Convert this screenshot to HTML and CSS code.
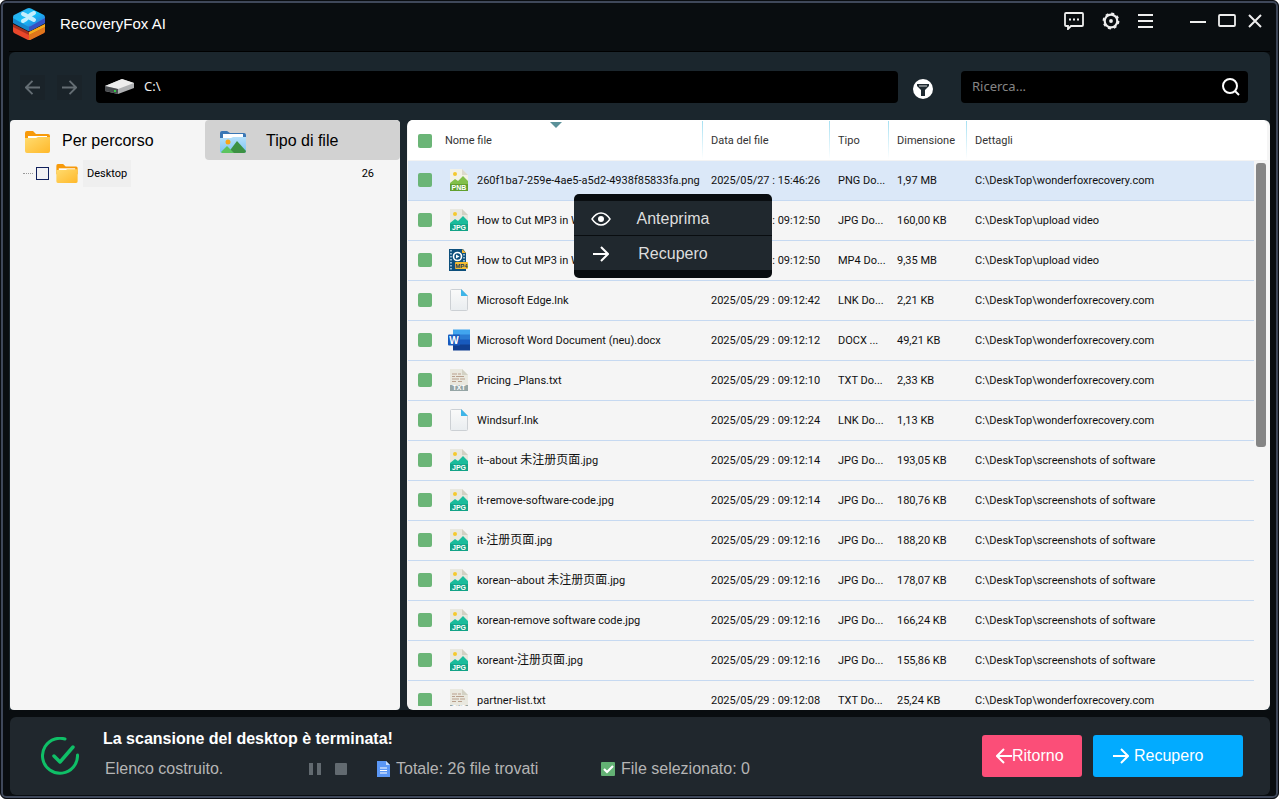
FILE: index.html
```html
<!DOCTYPE html>
<html lang="it">
  <head>
    <meta charset="utf-8">
    <title>RecoveryFox AI</title>
    <link rel="stylesheet" href="styles.css">
  </head>
  <body>
    <svg class="gradients" aria-hidden="true">
      <defs>
        <linearGradient id="gold" x1="0" y1="0" x2="1" y2="1">
          <stop offset="0" stop-color="#ffdc70"/>
          <stop offset="1" stop-color="#ffb82a"/>
        </linearGradient>
        <linearGradient id="sky" x1="0" y1="0" x2="0" y2="1">
          <stop offset="0" stop-color="#b5e0fb"/>
          <stop offset="1" stop-color="#7cc3f3"/>
        </linearGradient>
        <linearGradient id="page" x1="0" y1="0" x2="0" y2="1">
          <stop offset="0" stop-color="#fafafa"/>
          <stop offset="1" stop-color="#e9edf0"/>
        </linearGradient>
      </defs>
    </svg>
    <svg class="sprite" aria-hidden="true">
      <symbol id="folder" viewBox="0 0 25 22">
        <path d="M0 2Q0 0 2 0H8L11 3H23Q25 3 25 5V12H0Z" fill="#f79a0a"/>
        <rect x="3" y="5" width="19" height="5" fill="#fff"/>
        <path d="M0 7H11L13 6H25V20Q25 22 23 22H2Q0 22 0 20Z" fill="url(#gold)"/>
      </symbol>
      <symbol id="jpg" viewBox="0 0 18 22">
        <path d="M0 0H12L18 6V22H0Z" fill="#e9e8df"/>
        <path d="M12 0L18 6H12Z" fill="#d3d1c4"/>
        <circle cx="5" cy="5" r="2" fill="#f5c92f"/>
        <path d="M0 14L5 10L8 12L13 7L18 12V17H0Z" fill="#1abc9c"/>
        <rect y="15" width="18" height="7" fill="#12a387"/>
        <text x="9" y="21" class="tag">JPG</text>
      </symbol>
      <symbol id="png" viewBox="0 0 18 22">
        <path d="M0 0H12L18 6V22H0Z" fill="#f3f2e8"/>
        <path d="M12 0L18 6H12Z" fill="#dcdacd"/>
        <circle cx="5" cy="5" r="2" fill="#f5c92f"/>
        <path d="M0 14L5 10L8 12L13 7L18 12V17H0Z" fill="#82c04a"/>
        <rect y="15" width="18" height="7" fill="#61a02e"/>
        <text x="9" y="21" class="tag">PNB</text>
      </symbol>
      <symbol id="mp4" viewBox="0 0 20 22">
        <path d="M0 0H14L17 4V22H0Z" fill="#0d4f7c"/>
        <path d="M13 0L17 4H13Z" fill="#f2b632"/>
        <path d="M2 1V22M15 5V13" stroke="#cfe4f2" stroke-width="1.4" stroke-dasharray="1.5 1.5"/>
        <circle cx="8.500" cy="7.500" r="4" fill="none" stroke="#fff" stroke-width="1.6"/>
        <path d="M7 5.500V9.500L10.500 7.500Z" fill="#fff"/>
        <rect x="6" y="13" width="13" height="7" rx="1" fill="#f5bd2f"/>
        <text x="12.500" y="19" class="tag tag-dark">MP4</text>
      </symbol>
      <symbol id="txt" viewBox="0 0 18 22">
        <path d="M0 0H12L18 6V22H0Z" fill="#e9e8df"/>
        <path d="M12 0L18 6H12Z" fill="#d3d1c4"/>
        <path d="M2 5H7M8 5H11M2 7.500H5M6 7.500H14M2 10H9M10 10H15M2 12.500H6M8 12.500H12" stroke="#b9a08d"/>
        <rect y="16" width="18" height="6" fill="#95a5a5"/>
        <text x="9" y="21" class="tag">TXT</text>
      </symbol>
      <symbol id="blank" viewBox="0 0 18 22">
        <path d="M.5 1.500Q.5.500 1.500.500H11.500L17.500 7V20.500Q17.500 21.500 16.500 21.500H1.500Q.5 21.500.5 20.500Z" fill="url(#page)" stroke="#ccd0d4"/>
        <path d="M11 0L18 7H11Z" fill="#3fb5e8"/>
      </symbol>
      <symbol id="word" viewBox="0 0 22 21">
        <rect x="5" width="17" height="6" fill="#41a5ee"/>
        <rect x="5" y="5" width="17" height="6" fill="#2b7cd3"/>
        <rect x="5" y="10" width="17" height="6" fill="#185abd"/>
        <rect x="5" y="15" width="17" height="6" fill="#103f91"/>
        <rect y="5" width="12" height="11" rx="1" fill="#185abd"/>
        <text x="6" y="14" class="tag tag-word">W</text>
      </symbol>
      <symbol id="arrow-right" viewBox="0 0 16 16">
        <path d="M0 8H15M8 1L15 8L8 15" fill="none" stroke="currentColor" stroke-width="2"/>
      </symbol>
      <symbol id="arrow-left" viewBox="0 0 16 16">
        <path d="M16 8H1M8 1L1 8L8 15" fill="none" stroke="currentColor" stroke-width="2"/>
      </symbol>
    </svg>

    <div class="window">
      <header class="titlebar">
        <svg class="logo" viewBox="0 0 32 32" aria-hidden="true">
          <defs>
            <linearGradient id="top" x1="0" y1="0" x2="1" y2="1">
              <stop offset="0" stop-color="#3a9fe6"/>
              <stop offset=".5" stop-color="#12c4fa"/>
              <stop offset="1" stop-color="#3563d5"/>
            </linearGradient>
          </defs>
          <path d="M0 18L16 26L32 18V23Q32 24 31 25L17 32Q16 32 15 32L1 25Q0 24 0 23Z" fill="#e8472b"/>
          <path d="M16 26L32 18V23Q32 24 31 25L17 32H16Z" fill="#e0761c"/>
          <path d="M0 16L16 24L32 16V19L16 27L0 19Z" fill="#a8301f"/>
          <path d="M16 24L32 16V19L16 27Z" fill="#f6ac1d"/>
          <path d="M0 9L16 17L32 9V15L17 23H15L0 15Z" fill="#1687cc"/>
          <path d="M16 17L32 9V15L17 23H16Z" fill="#3551c4"/>
          <path d="M0 10Q0 7 1 7L14 .5Q16 -.5 18 .5L31 7Q32 8 32 10L18 18Q16 19 14 18Z" fill="url(#top)"/>
          <path d="M10 6Q13 7 15 9Q18 6 21 5M10 13Q13 12 15 9Q18 10 21 12" fill="none" stroke="#c4eefd" stroke-width="4" stroke-linecap="round"/>
        </svg>
        <h1 class="app-name">RecoveryFox AI</h1>
        <div class="window-tools">
          <button class="tool" aria-label="Feedback">
            <svg width="20" height="18" viewBox="0 0 20 18"><path d="M2 1H18Q19 1 19 2V13Q19 14 18 14H7L4 17V14H2Q1 14 1 13V2Q1 1 2 1Z" fill="none" stroke="currentColor" stroke-width="1.800"/><path d="M5 6.500H7V8.500H5ZM9 6.500H11V8.500H9ZM13 6.500H15V8.500H13Z" fill="currentColor"/></svg>
          </button>
          <button class="tool" aria-label="Impostazioni">
            <svg width="18" height="18" viewBox="0 0 18 18" fill="none" stroke="currentColor"><circle cx="9" cy="9" r="6.300" stroke-width="2.200"/><circle cx="9" cy="9" r="7.600" stroke-width="1.600" stroke-dasharray="3 2.969"/><circle cx="9" cy="9" r="1.900" fill="currentColor" stroke="none"/></svg>
          </button>
          <button class="tool" aria-label="Menu">
            <svg width="16" height="16" viewBox="0 0 16 16"><path d="M0 2H15M0 8H15M0 14H15" stroke="currentColor" stroke-width="2"/></svg>
          </button>
        </div>
        <div class="window-controls">
          <button class="tool" aria-label="Riduci a icona">
            <svg width="16" height="16" viewBox="0 0 16 16"><path d="M0 9H16" stroke="currentColor" stroke-width="2"/></svg>
          </button>
          <button class="tool" aria-label="Ingrandisci">
            <svg width="18" height="14" viewBox="0 0 18 14"><rect x="1" y="1" width="16" height="11" rx="1" fill="none" stroke="currentColor" stroke-width="1.800"/></svg>
          </button>
          <button class="tool" aria-label="Chiudi">
            <svg width="14" height="14" viewBox="0 0 14 14"><path d="M1 1L13 13M13 1L1 13" stroke="currentColor" stroke-width="2"/></svg>
          </button>
        </div>
      </header>

      <main class="workspace">
        <div class="toolbar">
          <div class="history">
            <button class="nav" aria-label="Indietro"><svg width="15" height="15"><use href="#arrow-left"/></svg></button>
            <button class="nav" aria-label="Avanti"><svg width="15" height="15"><use href="#arrow-right"/></svg></button>
          </div>
          <div class="field path">
            <svg width="30" height="16" viewBox="0 0 30 16" aria-hidden="true">
              <path d="M0 7L17 0L29 4V9L13 15L0 12Z" fill="#aeb0b2"/>
              <path d="M0 7L17 0L29 4L13 10Z" fill="#ededed"/>
              <path d="M0 7L13 10V15L0 12Z" fill="#4a4d50"/>
              <rect x="9" y="11" width="2" height="2" fill="#35c94a"/>
            </svg>
            <input type="text" value="C:\" aria-label="Percorso">
          </div>
          <button class="filter" aria-label="Filtro">
            <svg width="20" height="20" viewBox="0 0 20 20"><circle cx="10" cy="10" r="10" fill="#fff"/><path d="M4 5H16V7L12 11V17H8V11L4 7Z" fill="#1f2a31"/><path d="M6 7H14" stroke="#fff" stroke-width=".8"/></svg>
          </button>
          <div class="field search">
            <input type="search" placeholder="Ricerca..." aria-label="Ricerca">
            <button class="search-button" aria-label="Cerca">
              <svg width="18" height="18" viewBox="0 0 18 18"><circle cx="8" cy="8" r="7" fill="none" stroke="currentColor" stroke-width="2"/><path d="M13 13L17 17" stroke="currentColor" stroke-width="2"/></svg>
            </button>
          </div>
        </div>

        <div class="panels">
          <aside class="sidebar">
            <div class="tabs">
              <button class="tab">
                <svg width="25" height="22" aria-hidden="true"><use href="#folder"/></svg>
                <span>Per percorso</span>
              </button>
              <button class="tab tab-idle">
                <svg width="26" height="22" viewBox="0 0 26 22" aria-hidden="true">
                  <path d="M0 2Q0 0 2 0H7L10 2H24Q26 2 26 4V10H0Z" fill="#3a77b5"/>
                  <rect x="3" y="3" width="20" height="5" fill="#fff"/>
                  <path d="M0 7H11L13 6H26V20Q26 22 24 22H2Q0 22 0 20Z" fill="url(#sky)"/>
                  <circle cx="8" cy="11" r="2.500" fill="#f9a51a"/>
                  <path d="M8 22L17 10L26 20Q26 22 24 22Z" fill="#3c9143"/>
                  <path d="M1 21L7 15L14 22H2Z" fill="#5cc45f"/>
                </svg>
                <span>Tipo di file</span>
              </button>
            </div>
            <div class="tree-row">
              <span class="tree-line"></span>
              <input class="tree-check" type="checkbox" id="desktop">
              <svg width="22" height="19" viewBox="0 0 25 22" aria-hidden="true"><use href="#folder"/></svg>
              <label class="tree-name" for="desktop">Desktop</label>
              <span class="tree-count">26</span>
            </div>
          </aside>

          <section class="files">
            <div class="file-scroll">
              <table class="file-table">
                <colgroup>
                  <col class="col-check"><col class="col-name"><col class="col-date"><col class="col-type"><col class="col-size"><col><col class="col-bar">
                </colgroup>
                <thead>
                  <tr>
                    <th><input class="check" type="checkbox" aria-label="Seleziona tutto"></th>
                    <th class="sorted">Nome file</th>
                    <th>Data del file</th>
                    <th>Tipo</th>
                    <th>Dimensione</th>
                    <th>Dettagli</th>
                    <th></th>
                  </tr>
                </thead>
                <tbody>
                  <tr class="selected">
                    <td><input class="check" type="checkbox" aria-label="260f1ba7-259e-4ae5-a5d2-4938f85833fa.png"></td>
                    <td><div class="file"><svg><use href="#png"/></svg>260f1ba7-259e-4ae5-a5d2-4938f85833fa.png</div></td>
                    <td>2025/05/27 : 15:46:26</td><td>PNG Do...</td><td>1,97 MB</td><td>C:\DeskTop\wonderfoxrecovery.com</td><td></td>
                  </tr>
                  <tr>
                    <td><input class="check" type="checkbox" aria-label="How to Cut MP3, JPG"></td>
                    <td><div class="file"><svg><use href="#jpg"/></svg>How to Cut MP3 in W</div></td>
                    <td>2025/05/29 : 09:12:50</td><td>JPG Do...</td><td>160,00 KB</td><td>C:\DeskTop\upload video</td><td></td>
                  </tr>
                  <tr>
                    <td><input class="check" type="checkbox" aria-label="How to Cut MP3, MP4"></td>
                    <td><div class="file"><svg><use href="#mp4"/></svg>How to Cut MP3 in W</div></td>
                    <td>2025/05/29 : 09:12:50</td><td>MP4 Do...</td><td>9,35 MB</td><td>C:\DeskTop\upload video</td><td></td>
                  </tr>
                  <tr>
                    <td><input class="check" type="checkbox" aria-label="Microsoft Edge.lnk"></td>
                    <td><div class="file"><svg><use href="#blank"/></svg>Microsoft Edge.lnk</div></td>
                    <td>2025/05/29 : 09:12:42</td><td>LNK Do...</td><td>2,21 KB</td><td>C:\DeskTop\wonderfoxrecovery.com</td><td></td>
                  </tr>
                  <tr>
                    <td><input class="check" type="checkbox" aria-label="Microsoft Word Document (neu).docx"></td>
                    <td><div class="file"><svg><use href="#word"/></svg>Microsoft Word Document (neu).docx</div></td>
                    <td>2025/05/29 : 09:12:12</td><td>DOCX ...</td><td>49,21 KB</td><td>C:\DeskTop\wonderfoxrecovery.com</td><td></td>
                  </tr>
                  <tr>
                    <td><input class="check" type="checkbox" aria-label="Pricing _Plans.txt"></td>
                    <td><div class="file"><svg><use href="#txt"/></svg>Pricing _Plans.txt</div></td>
                    <td>2025/05/29 : 09:12:10</td><td>TXT Do...</td><td>2,33 KB</td><td>C:\DeskTop\wonderfoxrecovery.com</td><td></td>
                  </tr>
                  <tr>
                    <td><input class="check" type="checkbox" aria-label="Windsurf.lnk"></td>
                    <td><div class="file"><svg><use href="#blank"/></svg>Windsurf.lnk</div></td>
                    <td>2025/05/29 : 09:12:24</td><td>LNK Do...</td><td>1,13 KB</td><td>C:\DeskTop\wonderfoxrecovery.com</td><td></td>
                  </tr>
                  <tr>
                    <td><input class="check" type="checkbox" aria-label="it--about 未注册页面.jpg"></td>
                    <td><div class="file"><svg><use href="#jpg"/></svg><span>it--about <span class="cjk">未注册页面</span>.jpg</span></div></td>
                    <td>2025/05/29 : 09:12:14</td><td>JPG Do...</td><td>193,05 KB</td><td>C:\DeskTop\screenshots of software</td><td></td>
                  </tr>
                  <tr>
                    <td><input class="check" type="checkbox" aria-label="it-remove-software-code.jpg"></td>
                    <td><div class="file"><svg><use href="#jpg"/></svg>it-remove-software-code.jpg</div></td>
                    <td>2025/05/29 : 09:12:14</td><td>JPG Do...</td><td>180,76 KB</td><td>C:\DeskTop\screenshots of software</td><td></td>
                  </tr>
                  <tr>
                    <td><input class="check" type="checkbox" aria-label="it-注册页面.jpg"></td>
                    <td><div class="file"><svg><use href="#jpg"/></svg><span>it-<span class="cjk">注册页面</span>.jpg</span></div></td>
                    <td>2025/05/29 : 09:12:16</td><td>JPG Do...</td><td>188,20 KB</td><td>C:\DeskTop\screenshots of software</td><td></td>
                  </tr>
                  <tr>
                    <td><input class="check" type="checkbox" aria-label="korean--about 未注册页面.jpg"></td>
                    <td><div class="file"><svg><use href="#jpg"/></svg><span>korean--about <span class="cjk">未注册页面</span>.jpg</span></div></td>
                    <td>2025/05/29 : 09:12:16</td><td>JPG Do...</td><td>178,07 KB</td><td>C:\DeskTop\screenshots of software</td><td></td>
                  </tr>
                  <tr>
                    <td><input class="check" type="checkbox" aria-label="korean-remove software code.jpg"></td>
                    <td><div class="file"><svg><use href="#jpg"/></svg>korean-remove software code.jpg</div></td>
                    <td>2025/05/29 : 09:12:16</td><td>JPG Do...</td><td>166,24 KB</td><td>C:\DeskTop\screenshots of software</td><td></td>
                  </tr>
                  <tr>
                    <td><input class="check" type="checkbox" aria-label="koreant-注册页面.jpg"></td>
                    <td><div class="file"><svg><use href="#jpg"/></svg><span>koreant-<span class="cjk">注册页面</span>.jpg</span></div></td>
                    <td>2025/05/29 : 09:12:16</td><td>JPG Do...</td><td>155,86 KB</td><td>C:\DeskTop\screenshots of software</td><td></td>
                  </tr>
                  <tr>
                    <td><input class="check" type="checkbox" aria-label="partner-list.txt"></td>
                    <td><div class="file"><svg><use href="#txt"/></svg>partner-list.txt</div></td>
                    <td>2025/05/29 : 09:12:08</td><td>TXT Do...</td><td>25,24 KB</td><td>C:\DeskTop\wonderfoxrecovery.com</td><td></td>
                  </tr>
                </tbody>
              </table>
            </div>
            <div class="scroll-thumb"></div>
            <div class="context-menu">
              <button class="menu-item">
                <svg width="20" height="14" viewBox="0 0 20 14"><path d="M1 7Q5 1 10 1T19 7Q15 13 10 13T1 7Z" fill="none" stroke="currentColor" stroke-width="1.400"/><circle cx="10" cy="7" r="3" fill="currentColor"/></svg>
                <span>Anteprima</span>
              </button>
              <button class="menu-item">
                <svg width="16" height="16" viewBox="0 0 16 16"><use href="#arrow-right"/></svg>
                <span>Recupero</span>
              </button>
            </div>
          </section>
        </div>
      </main>

      <footer class="status">
        <svg width="38" height="38" viewBox="0 0 38 38" aria-hidden="true">
          <path d="M24 2Q19 .5 14 2A17.500 17.500 0 1 0 36.500 18" fill="none" stroke="#0fbf67" stroke-width="3" stroke-linecap="round"/>
          <path d="M13 19L19 25L32 10" fill="none" stroke="#0fbf67" stroke-width="3.500" stroke-linecap="round" stroke-linejoin="round"/>
        </svg>
        <div class="status-text">
          <h2 class="status-title">La scansione del desktop è terminata!</h2>
          <div class="status-line">
            <span>Elenco costruito.</span>
            <div class="scan-controls">
              <button class="scan" aria-label="Pausa"><svg width="12" height="12"><path d="M0 0H4V12H0ZM8 0H12V12H8Z" fill="currentColor"/></svg></button>
              <button class="scan" aria-label="Ferma"><svg width="12" height="12"><rect width="12" height="12" rx="1" fill="currentColor"/></svg></button>
            </div>
            <div class="stat">
              <svg width="13" height="16" viewBox="0 0 13 16" aria-hidden="true"><path d="M0 0H9L13 4V16H0Z" fill="#5b97f5"/><path d="M9 0L13 4H9Z" fill="#c9defc"/><path d="M3 7H10M3 9.500H10M3 12H10" stroke="#fff"/></svg>
              <span>Totale: 26 file trovati</span>
            </div>
            <div class="stat">
              <svg width="14" height="14" viewBox="0 0 14 14" aria-hidden="true"><rect width="14" height="14" rx="1" fill="#63b174"/><path d="M3 7L6 10L12 4" fill="none" stroke="#fff" stroke-width="2.200"/></svg>
              <span>File selezionato: 0</span>
            </div>
          </div>
        </div>
        <button class="action action-back"><svg width="16" height="16"><use href="#arrow-left"/></svg>Ritorno</button>
        <button class="action action-recover"><svg width="16" height="16"><use href="#arrow-right"/></svg>Recupero</button>
      </footer>
    </div>
  </body>
</html>
```

FILE: styles.css
```css
* {
  box-sizing: border-box;
}
body {
  margin: 0;
  background-color: white;
  font-family: 'Liberation Sans', Arial, sans-serif;
  font-size: 16px;
}
button {
  margin: 0;
  padding: 0;
  border: 0;
  background: none;
  color: inherit;
  font: inherit;
}
svg {
  display: block;
  flex: none;
}
.gradients {
  position: absolute;
  width: 0;
  height: 0;
}
.sprite {
  display: none;
}
.tag {
  fill: white;
  font-family: 'Liberation Sans', Arial, sans-serif;
  font-size: 7px;
  font-weight: bold;
  text-anchor: middle;
}
.tag-dark {
  fill: #153a5a;
  font-size: 6px;
}
.tag-word {
  font-size: 10px;
}

.window {
  display: flex;
  flex-direction: column;
  height: 100vh;
  padding: 3px 8px;
  border: 1px solid #0a0d11;
  border-radius: 6px;
  background-color: #090d10;
  box-shadow: inset 0 0 0 2px #3f485a;
}

/* title bar */
.titlebar {
  display: flex;
  align-items: flex-start;
  height: 48px;
  padding: 4px 8px 0 4px;
  border-bottom: 1px solid black;
  color: white;
}
.logo {
  width: 32px;
  height: 32px;
}
.app-name {
  flex: 1;
  margin: 0 0 0 15px;
  font-size: 15px;
  font-weight: normal;
  line-height: 32px;
}
.window-tools,
.window-controls {
  display: flex;
  align-items: center;
  gap: 18px;
  height: 25px;
  color: #eee;
}
.window-controls {
  gap: 12px;
  margin-left: 36px;
}

/* toolbar */
.workspace {
  display: flex;
  flex: 1;
  flex-direction: column;
  min-height: 0;
  border-radius: 6px 6px 0 0;
  background-color: #1b262d;
}
.toolbar {
  display: flex;
  align-items: center;
  height: 68px;
  padding: 2px 22px 0 11px;
}
.history {
  display: flex;
  gap: 12px;
  margin-right: 14px;
}
.nav {
  display: flex;
  align-items: center;
  justify-content: center;
  width: 25px;
  height: 25px;
  background-color: #1a2329;
  color: #646d73;
}
.field {
  display: flex;
  align-items: center;
  height: 32px;
  border-radius: 4px;
  background-color: black;
}
.field input {
  flex: 1;
  min-width: 0;
  padding: 0 0 2px;
  border: 0;
  outline: 0;
  background: none;
  color: #eee;
  font-family: 'Noto Sans', sans-serif;
  font-size: 13px;
}
.field input::placeholder {
  color: #858585;
}
.path {
  flex: 1;
  gap: 9px;
  padding: 0 9px;
}
.filter {
  padding: 4px 5px 0;
  margin: 0 23px 0 10px;
}
.search {
  width: 287px;
  padding: 0 8px 0 11px;
}
.search-button {
  color: white;
}

/* panels */
.panels {
  display: flex;
  flex: 1;
  gap: 7px;
  min-height: 0;
  font-family: Roboto, sans-serif;
  font-size: 11px;
}
.sidebar {
  width: 390px;
  margin-left: 1px;
  overflow: hidden;
  border-radius: 4px;
  background-color: #f5f5f5;
}
.tabs {
  display: flex;
}
.tab {
  display: flex;
  flex: 1;
  align-items: center;
  gap: 12px;
  height: 40px;
  padding: 3px 15px 0;
  font-family: 'Liberation Sans', Arial, sans-serif;
  font-size: 16px;
}
.tab span {
  padding-bottom: 2px;
}
.tab-idle {
  gap: 20px;
  border-radius: 4px;
  background-color: #d2d2d2;
}
.tree-row {
  display: flex;
  align-items: center;
  height: 27px;
  padding: 0 26px 0 13px;
}
.tree-line {
  width: 10px;
  border-top: 1px dotted #999;
}
.tree-check {
  appearance: none;
  width: 13px;
  height: 13px;
  margin: 0 7px 0 3px;
  border: 1px solid #10205c;
  background-color: #f1f1f3;
}
.tree-name {
  margin-left: 5px;
  padding: 0 4px;
  background-color: #efefef;
  line-height: 27px;
}
.tree-count {
  margin-left: auto;
}

/* file list */
.files {
  position: relative;
  flex: 1;
  min-width: 0;
  padding: 0 3px 4px 1px;
  border-radius: 6px;
  background-color: #f5f5f5;
}
.file-scroll {
  height: 100%;
  overflow: hidden;
  border-radius: 5px 5px 0 0;
}
.file-table {
  width: 100%;
  border-collapse: separate;
  border-spacing: 0;
  table-layout: fixed;
}
.col-check {
  width: 37px;
}
.col-name {
  width: 257px;
}
.col-date {
  width: 127px;
}
.col-type {
  width: 59px;
}
.col-size {
  width: 78px;
}
.col-bar {
  width: 13px;
}
th,
td {
  height: 40px;
  padding: 0 0 0 9px;
  overflow: hidden;
  text-align: left;
  white-space: nowrap;
}
th {
  height: 41px;
  padding-top: 1px;
  border-bottom: 1px solid #f3f3f3;
  background: white;
  color: #333;
  font-weight: normal;
}
th:nth-child(n+3):nth-child(-n+6) {
  background: linear-gradient(#a5e0f2, white) left / 1px 38px no-repeat white;
}
td {
  padding-bottom: 1px;
  border-bottom: 1px solid #c6d9f1;
  color: #101010;
}
th:nth-child(2),
td:nth-child(2) {
  padding-left: 0;
}
td:last-child {
  border-bottom: 0;
}
.sorted {
  position: relative;
}
.sorted::after {
  position: absolute;
  top: 2px;
  left: 105px;
  border: 6px solid transparent;
  border-top-color: #5b9199;
  border-bottom: 0;
  content: '';
}
.selected td:not(:last-child) {
  background-color: #dbe8f8;
}
.check {
  display: block;
  appearance: none;
  width: 14px;
  height: 14px;
  margin: 0 0 0 1px;
  border-radius: 2px;
  background-color: #6bb577;
}
.file {
  display: flex;
  align-items: center;
  gap: 7px;
  padding-left: 3px;
}
.file svg {
  width: 22px;
  height: 22px;
}
.cjk {
  font-family: 'Noto Sans CJK SC', sans-serif;
  font-size: 12px;
  line-height: 12px;
}
.scroll-thumb {
  position: absolute;
  top: 43px;
  right: 4px;
  width: 10px;
  height: 284px;
  border-radius: 3px;
  background-color: #858585;
}
.context-menu {
  position: absolute;
  top: 74px;
  left: 167px;
  width: 198px;
  padding: 7px 0 8px;
  border-radius: 5px;
  background-color: #090d10;
  color: #ddd;
  font-family: 'Liberation Sans', Arial, sans-serif;
  font-size: 16px;
}
.menu-item {
  display: grid;
  grid-template-columns: 20px 1fr;
  align-items: center;
  justify-items: center;
  width: 100%;
  height: 34px;
  padding: 1px 37px 0 17px;
  background-color: #20282e;
}
.menu-item + .menu-item {
  margin-top: 1px;
}
.menu-item svg {
  color: white;
}

/* status bar */
.status {
  display: flex;
  align-items: center;
  height: 78px;
  margin: 7px 0 0 1px;
  padding: 0 27px 0 31px;
  border-radius: 6px;
  background-color: #20272d;
  color: #b5b5b5;
}
.status-text {
  flex: 1;
  margin-left: 24px;
  padding-bottom: 4px;
}
.status-title {
  margin: 0 0 10px;
  color: white;
  font-size: 16px;
  line-height: 20px;
}
.status-line {
  display: grid;
  grid-template-columns: 204px 68px 224px 1fr;
  padding-left: 2px;
  line-height: 20px;
}
.scan-controls {
  display: flex;
  align-items: center;
  gap: 14px;
  color: #626a70;
}
.stat {
  display: flex;
  align-items: center;
  gap: 6px;
}
.action {
  display: flex;
  align-items: center;
  height: 42px;
  border-radius: 3px;
  color: white;
}
.action-back {
  width: 100px;
  padding-left: 14px;
  background-color: #fb4e78;
}
.action-recover {
  gap: 5px;
  width: 150px;
  margin-left: 11px;
  padding-left: 20px;
  background-color: #02abff;
}
```
